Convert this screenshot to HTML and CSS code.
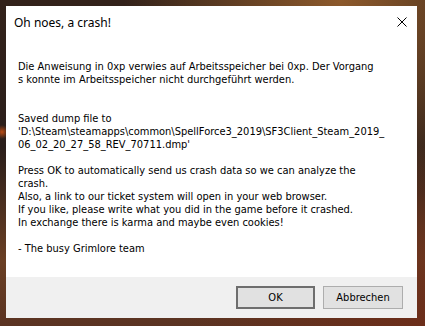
FILE: index.html
```html
<!DOCTYPE html>
<html lang="de">
<head>
    <meta charset="UTF-8">
    <title>Oh noes, a crash!</title>
    <link rel="stylesheet" href="styles.css">
</head>
<body>

<div class="dialog">
    <div class="titlebar">
        <span class="title">Oh noes, a crash!</span>
        <svg class="close" width="10" height="10" viewBox="0 0 10 10">
            <path d="M0.5 0.5 L9.5 9.5 M9.5 0.5 L0.5 9.5" stroke="#000" stroke-width="1" fill="none"/>
        </svg>
    </div>

    <div class="message">
        <p class="gap-2">Die Anweisung in 0xp verwies auf Arbeitsspeicher bei 0xp. Der Vorgang<br>s konnte im Arbeitsspeicher nicht durchgeführt werden.</p>
        <p>Saved dump file to<br>'D:\Steam\steamapps\common\SpellForce3_2019\SF3Client_Steam_2019_<br>06_02_20_27_58_REV_70711.dmp'</p>
        <p>Press OK to automatically send us crash data so we can analyze the<br>crash.<br>Also, a link to our ticket system will open in your web browser.<br>If you like, please write what you did in the game before it crashed.<br>In exchange there is karma and maybe even cookies!</p>
        <p>- The busy Grimlore team</p>
    </div>

    <div class="footer">
        <button class="btn btn-default">OK</button>
        <button class="btn">Abbrechen</button>
    </div>
</div>

</body>
</html>
```

FILE: styles.css
```css
html, body {
    height: 100%;
}
body {
    margin: 0;
    padding: 6px 0 0 6px;
    box-sizing: border-box;
    font-family: "DejaVu Sans Condensed", "DejaVu Sans", sans-serif;
    background:
        radial-gradient(circle at 2px 132px, rgba(200, 80, 20, 0.9), transparent 7px),
        radial-gradient(ellipse at 80% 0%, rgba(150, 95, 45, 0.9), transparent 45%),
        radial-gradient(ellipse at 100% 100%, rgba(110, 45, 25, 0.9), transparent 40%),
        linear-gradient(to bottom, #33221a 0%, #2a1e1a 45%, #6a3f24 80%, #5a3322 100%);
    overflow: hidden;
}
.dialog {
    width: 411px;
    height: 312px;
    background-color: #ffffff;
    display: flex;
    flex-direction: column;
}
.titlebar {
    height: 32px;
    display: flex;
    align-items: center;
    justify-content: space-between;
    padding: 0 10px 0 8px;
}
.title {
    font-family: "Noto Sans", sans-serif;
    font-size: 12px;
    color: #000;
}
.close {
    display: block;
}
.message {
    padding: 22px 12px 0 12px;
    font-size: 11px;
    line-height: 13px;
    color: #000;
    white-space: nowrap;
}
.message p {
    margin: 0 0 13px;
}
.message p.gap-2 {
    margin-bottom: 26px;
}
.footer {
    margin-top: auto;
    height: 41px;
    box-sizing: border-box;
    background-color: #f0f0f0;
    display: flex;
    justify-content: flex-end;
    gap: 8px;
    padding: 9px 14px 0 0;
}
.btn {
    width: 80px;
    height: 23px;
    box-sizing: border-box;
    background-color: #e1e1e1;
    border: 1px solid #adadad;
    font-family: "DejaVu Sans Condensed", "DejaVu Sans", sans-serif;
    font-size: 11px;
    color: #000;
    padding: 0;
}
.btn-default {
    width: 79px;
    border: 2px solid #6e6e6e;
}
```
